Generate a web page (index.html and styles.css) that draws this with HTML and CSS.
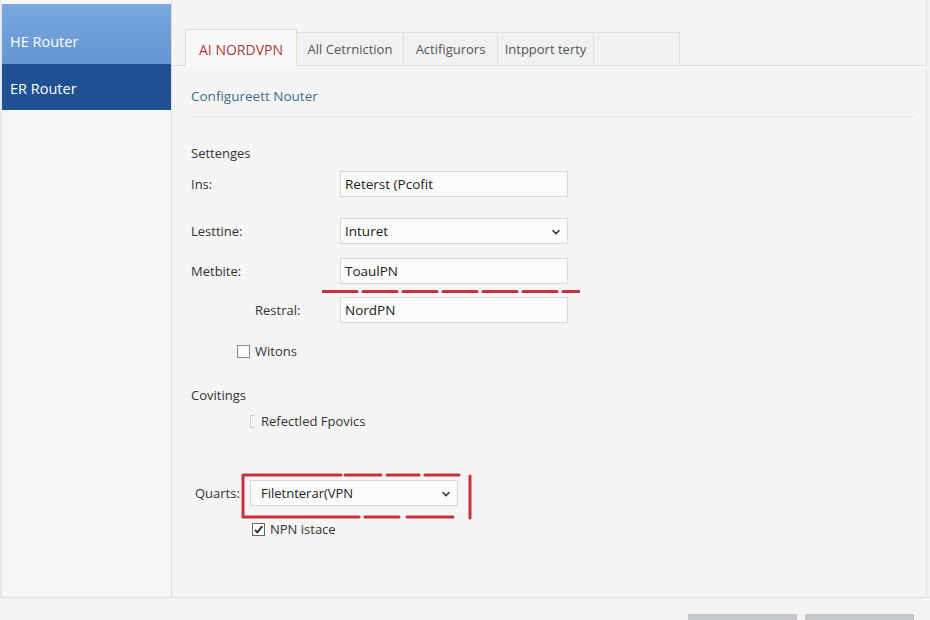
FILE: index.html
```html
<!DOCTYPE html>
<html>
<head>
<meta charset="utf-8">
<link rel="stylesheet" href="styles.css">
</head>
<body>
<div class="app">
  <aside class="sidebar">
    <div class="nav-item light">HE Router</div>
    <div class="nav-item dark">ER Router</div>
  </aside>
  <main class="main">
    <div class="tabs">
      <div class="tab active t1">AI NORDVPN</div>
      <div class="tab t2">All Cetrniction</div>
      <div class="tab t3">Actifigurors</div>
      <div class="tab t4">Intpport terty</div>
      <div class="tab t5"></div>
    </div>
    <div class="content">
      <div class="heading">Configureett Nouter</div>
      <div class="section-title">Settenges</div>
      <div class="row r1">
        <span class="label">Ins:</span>
        <div class="field">Reterst (Pcofit</div>
      </div>
      <div class="row r2">
        <span class="label">Lesttine:</span>
        <div class="field select">Inturet
          <svg class="chev" width="10" height="6" viewBox="0 0 10 6"><path d="M1.5 1.2 L5 4.6 L8.5 1.2" fill="none" stroke="#333" stroke-width="1.5"/></svg>
        </div>
      </div>
      <div class="row r3">
        <span class="label">Metbite:</span>
        <div class="field">ToaulPN</div>
      </div>
      <svg class="redline" width="258" height="5" viewBox="0 0 258 5"><line x1="1" y1="2.5" x2="257" y2="2.5" stroke="#c9303c" stroke-width="3" stroke-dasharray="34 6" stroke-linecap="round"/></svg>
      <div class="row r4">
        <span class="label indent">Restral:</span>
        <div class="field">NordPN</div>
      </div>
      <div class="row check-row r5">
        <span class="box"></span><span class="ctext">Witons</span>
      </div>
      <div class="section-title s2">Covitings</div>
      <div class="row check-row r6">
        <span class="box faint"></span><span class="ctext">Refectled Fpovics</span>
      </div>
      <div class="row r7">
        <span class="label short">Quarts:</span>
        <div class="field select narrow">Filetnterar(VPN
          <svg class="chev" width="10" height="6" viewBox="0 0 10 6"><path d="M1.5 1.2 L5 4.6 L8.5 1.2" fill="none" stroke="#333" stroke-width="1.5"/></svg>
          <svg class="redbox" width="232" height="48" viewBox="0 0 232 48"><path d="M2 3 L2 45 M2 3 L100 3 M104 3 L140 3 M146 3 L178 3 M184 3 L218 3 M229 4 L229 46 M2 45 L118 45 M124 45 L158 45 M166 45 L212 45" fill="none" stroke="#c9303c" stroke-width="3" stroke-linecap="round"/></svg>
        </div>
      </div>
      <div class="row check-row r8">
        <span class="box checked"><svg width="11" height="11" viewBox="0 0 11 11"><path d="M2 5.8 L4.4 8.4 L9.2 2.2" fill="none" stroke="#222" stroke-width="1.8"/></svg></span><span class="ctext">NPN istace</span>
      </div>
    </div>
  </main>
</div>
<div class="footer">
  <div class="btn"></div>
  <div class="btn"></div>
</div>
</body>
</html>
```
FILE: styles.css
```css
* { box-sizing: border-box; }
html, body { margin: 0; padding: 0; }
body {
  width: 930px;
  height: 620px;
  overflow: hidden;
  background: #f4f4f4;
  font-family: "Open Sans", "Noto Sans", sans-serif;
  font-size: 13px;
  color: #333;
}
.app {
  display: grid;
  grid-template-columns: 172px 755px;
  height: 598px;
  border-bottom: 1px solid #e0e0e0;
}
.sidebar {
  background: #f6f6f6;
  border-left: 2px solid #e2eaf0;
  border-right: 1px solid #dcdcdc;
  padding-top: 4px;
}
.nav-item {
  color: #fff;
  font-size: 14.5px;
  padding-left: 8px;
  display: flex;
  align-items: center;
}
.nav-item.light {
  height: 60px;
  padding-top: 14px;
  background: linear-gradient(#7aa8de, #6396d2);
}
.nav-item.dark {
  height: 46px;
  padding-top: 2px;
  background: #1f5091;
}
.main {
  background: #f5f5f5;
  border-right: 1px solid #e4e4e4;
  padding-top: 30px;
}
.tabs {
  display: flex;
  align-items: flex-end;
  height: 36px;
  padding-left: 13px;
  border-bottom: 1px solid #dedede;
}
.tab {
  height: 33px;
  display: flex;
  align-items: center;
  justify-content: center;
  border: 1px solid #e0e0e0;
  border-bottom: none;
  border-left: none;
  background: #f1f1f1;
  color: #555;
  font-size: 13px;
}
.tab.active {
  height: 37px;
  margin-bottom: -1px;
  border-left: 1px solid #e4dccb;
  border-color: #e4dccb;
  background: #f9f9f9;
  color: #a83a3a;
  font-size: 14px;
  padding-top: 2px;
}
.t1 { width: 112px; }
.t2 { width: 107px; }
.t3 { width: 94px; }
.t4 { width: 96px; }
.t5 { width: 86px; }
.content {
  padding-left: 19px;
  padding-right: 12px;
}
.heading {
  color: #3d6c86;
  font-size: 13.5px;
  height: 51px;
  padding-top: 21px;
  border-bottom: 1px solid #e2e2e2;
}
.section-title {
  margin-top: 26px;
  height: 20px;
  line-height: 20px;
  color: #333;
}
.row {
  display: flex;
  align-items: center;
}
.label {
  width: 149px;
  flex: none;
}
.label.indent { padding-left: 64px; }
.label.short { width: 59px; padding-left: 4px; }
.field {
  position: relative;
  width: 228px;
  height: 26px;
  border: 1px solid #d8d8d8;
  background: #fbfbfb;
  padding-left: 4px;
  display: flex;
  align-items: center;
  color: #222;
  font-size: 13.5px;
}
.field.narrow { width: 208px; padding-left: 10px; font-size: 13px; }
.chev {
  position: absolute;
  right: 6px;
  top: 10px;
}
.r1 { margin-top: 8px; }
.r2 { margin-top: 21px; }
.r3 { margin-top: 14px; }
.redline {
  display: block;
  margin-left: 131px;
  margin-top: 5px;
}
.r4 { margin-top: 3px; }
.check-row { height: 20px; }
.r5 { margin-top: 18px; padding-left: 46px; }
.s2 { margin-top: 24px; }
.r6 { margin-top: 6px; padding-left: 59px; }
.r7 { margin-top: 49px; }
.r8 { margin-top: 13px; padding-left: 61px; }
.box {
  width: 13px;
  height: 13px;
  border: 1px solid #8a8a8a;
  background: #fff;
  margin-right: 5px;
  display: flex;
  align-items: center;
  justify-content: center;
}
.box.faint {
  width: 5px;
  border: 1px solid #ccc;
  border-right: none;
  background: transparent;
  margin-right: 6px;
}
.box.checked { border-color: #666; }
.redbox {
  position: absolute;
  left: -10px;
  top: -9px;
}
.footer {
  height: 21px;
  display: flex;
  justify-content: flex-end;
  gap: 8px;
  padding-top: 16px;
  padding-right: 16px;
  background: #f3f3f3;
}
.btn {
  width: 109px;
  height: 12px;
  background: #c3c7cc;
}
```
